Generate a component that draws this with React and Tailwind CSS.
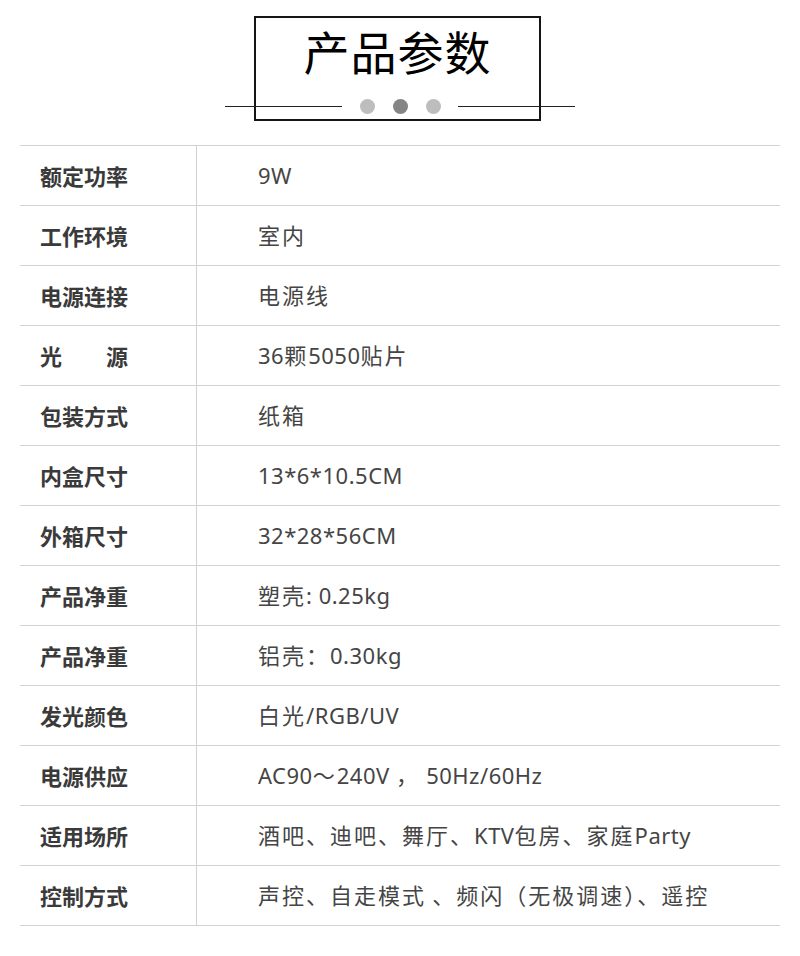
const rows = [
  ["额定功率", "9W"],
  ["工作环境", "室内"],
  ["电源连接", "电源线"],
  ["光源", "36颗5050贴片"],
  ["包装方式", "纸箱"],
  ["内盒尺寸", "13*6*10.5CM"],
  ["外箱尺寸", "32*28*56CM"],
  ["产品净重", "塑壳: 0.25kg"],
  ["产品净重", "铝壳：0.30kg"],
  ["发光颜色", "白光/RGB/UV"],
  ["电源供应", "AC90～240V ， 50Hz/60Hz"],
  ["适用场所", "酒吧、迪吧、舞厅、KTV包房、家庭Party"],
  ["控制方式", "声控、自走模式 、频闪（无极调速）、遥控"],
];

// split a value into CJK / latin runs so the CJK glyphs get wider spacing
function Value({ text }) {
  const parts = text.match(/[\u3000-\u9fff\uff00-\uffef]+|[^\u3000-\u9fff\uff00-\uffef]+/g);
  return (
    <span>
      {parts.map((p, i) =>
        /[\u3000-\u9fff\uff00-\uffef]/.test(p) ? (
          <span key={i} className="tracking-[2px]">{p}</span>
        ) : (
          <span key={i}>{p}</span>
        )
      )}
    </span>
  );
}

function Label({ text }) {
  if (text.length === 2) {
    return (
      <div className="flex w-[88px] justify-between">
        <span>{text[0]}</span>
        <span>{text[1]}</span>
      </div>
    );
  }
  return <span>{text}</span>;
}

export default function App() {
  return (
    <div className="w-[800px] h-[956px] bg-white font-['Noto_Sans','Noto_Sans_CJK_SC',sans-serif]">
      {/* header */}
      <div className="relative h-[145px]">
        <div className="absolute left-[254px] top-[16px] w-[287px] h-[105px] border-2 border-[#151515] flex justify-center">
          <h1 className="mt-[4px] text-[46px] leading-[56px] text-black tracking-[1px] font-['Noto_Sans_CJK_SC',sans-serif]">产品参数</h1>
        </div>
        <div className="absolute left-[225px] top-[106px] w-[117px] h-px bg-[#222]" />
        <div className="absolute left-[458px] top-[106px] w-[117px] h-px bg-[#222]" />
        <div className="absolute left-[360px] top-[99px] flex gap-[18px]">
          <span className="size-[15px] rounded-full bg-[#bdbdbd]" />
          <span className="size-[15px] rounded-full bg-[#858585]" />
          <span className="size-[15px] rounded-full bg-[#bdbdbd]" />
        </div>
      </div>

      {/* table */}
      <div className="mx-[20px] border-t border-[#d2d2d2]">
        {rows.map(([k, v], i) => (
          <div key={i} className="flex h-[60px] border-b border-[#d2d2d2]">
            <div className="w-[177px] border-r border-[#d2d2d2] pl-[20px] flex items-center text-[22px] font-bold text-[#3a3a3a] font-['Noto_Sans_CJK_SC',sans-serif]">
              <Label text={k} />
            </div>
            <div className="flex-1 pl-[61px] flex items-center text-[22px] tracking-[0.5px] text-[#454545] whitespace-pre">
              <Value text={v} />
            </div>
          </div>
        ))}
      </div>
    </div>
  );
}
